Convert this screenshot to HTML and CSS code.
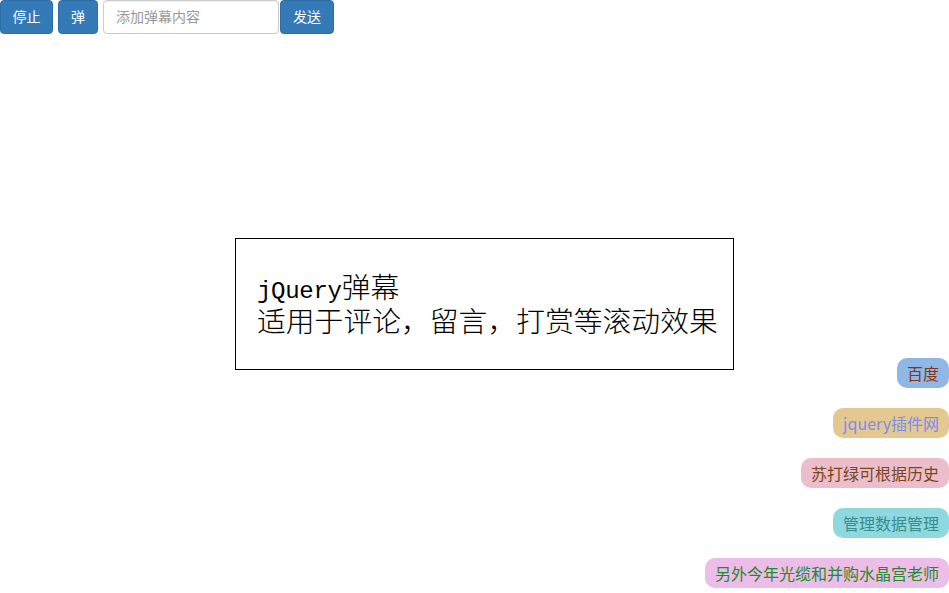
FILE: index.html
```html
<!DOCTYPE html>
<html lang="zh-CN">
<head>
<meta charset="utf-8">
<title>jQuery弹幕</title>
<link rel="stylesheet" href="styles.css">
</head>
<body>
<div class="toolbar">
  <button class="btn btn-stop">停止</button>
  <button class="btn btn-pop">弹</button>
  <input class="text-input" type="text" placeholder="添加弹幕内容">
  <button class="btn btn-send">发送</button>
</div>
<div class="intro">
  <div class="intro-line"><span class="latin">jQuery</span>弹幕</div>
  <div class="intro-line">适用于评论，留言，打赏等滚动效果</div>
</div>
<div class="screen">
  <span class="dm dm1">百度</span>
  <span class="dm dm2">jquery插件网</span>
  <span class="dm dm3">苏打绿可根据历史</span>
  <span class="dm dm4">管理数据管理</span>
  <span class="dm dm5">另外今年光缆和并购水晶宫老师</span>
</div>
</body>
</html>
```

FILE: styles.css
```css
html, body {
  margin: 0;
  padding: 0;
  background: #fff;
  font-family: "Liberation Sans", "Noto Sans CJK SC", sans-serif;
}
body {
  position: relative;
  width: 949px;
  height: 593px;
  overflow: hidden;
}
.toolbar {
  display: flex;
  align-items: flex-start;
  height: 34px;
}
.btn {
  box-sizing: border-box;
  height: 34px;
  padding: 6px 12px;
  border: 1px solid #2e6da4;
  border-radius: 4px;
  background: #337ab7;
  color: #fff;
  font-family: "Liberation Sans", "Noto Sans CJK SC", sans-serif;
  font-size: 14px;
  line-height: 20px;
  cursor: pointer;
}
.btn-stop { width: 53px; margin-right: 5px; padding: 6px 0; }
.btn-pop { width: 40px; margin-right: 5px; padding: 6px 0; }
.btn-send { width: 54px; margin-left: 1px; padding: 6px 0; }
.text-input {
  box-sizing: border-box;
  width: 176px;
  height: 34px;
  padding: 6px 12px;
  border: 1px solid #ccc;
  border-radius: 4px;
  box-shadow: inset 0 1px 1px rgba(0,0,0,.075);
  font-family: "Liberation Sans", "Noto Sans CJK SC", sans-serif;
  font-size: 14px;
  color: #555;
  outline: none;
}
.text-input::placeholder { color: #999; }
.intro {
  box-sizing: border-box;
  width: 499px;
  height: 132px;
  margin: 204px 0 0 235px;
  padding: 30px 10px 0 21px;
  border: 1px solid #000;
  font-family: "Noto Sans CJK SC", sans-serif;
  font-size: 28.8px;
  font-weight: 300;
  color: #000;
  white-space: nowrap;
}
.intro-line {
  height: 34px;
  line-height: 34px;
}
.latin {
  font-family: "Liberation Mono", monospace;
  font-size: 24px;
  font-weight: 400;
  letter-spacing: -0.3px;
}
.screen {
  position: absolute;
  left: 0;
  top: 0;
  width: 949px;
  height: 593px;
  pointer-events: none;
}
.dm {
  position: absolute;
  right: 0;
  height: 30px;
  padding: 0 10px;
  border-radius: 10px;
  font-family: "Noto Sans CJK SC", sans-serif;
  font-size: 16px;
  line-height: 30px;
  white-space: nowrap;
}
.dm1 { top: 358px; background: #8fb8e6; color: #8b3212; }
.dm2 { top: 408px; background: #e4c890; color: #7b8cf0; }
.dm3 { top: 458px; background: #ecbdca; color: #7a461c; }
.dm4 { top: 508px; background: #8fd8e0; color: #3a8d8a; }
.dm5 { top: 558px; background: #ecbde9; color: #23892a; }
```
